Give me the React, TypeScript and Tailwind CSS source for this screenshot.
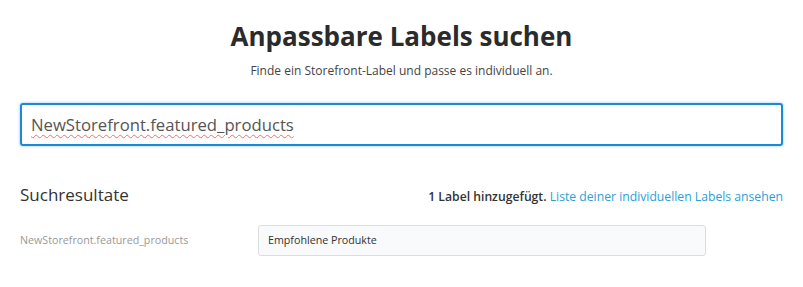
import React from "react";

export default function App() {
  return (
    <div className="w-[803px] h-[287px] bg-white px-5 pt-[18px]" style={{ fontFamily: '"Open Sans", sans-serif' }}>
      <h1 className="text-center text-[26px] leading-[36px] font-bold text-[#2b2b2b]">Anpassbare Labels suchen</h1>
      <p className="text-center text-[12px] leading-[17px] text-[#444] mt-[8px]">Finde ein Storefront-Label und passe es individuell an.</p>
      <div className="mt-[24px] h-[43px] w-[763px] rounded-[3px] border-2 border-[#1a8ad8] shadow-[0_0_3px_rgba(26,138,216,0.5)] flex items-center px-[9px]">
        <span className="text-[16.7px] text-[#555] underline decoration-wavy decoration-[#f07070] decoration-1 underline-offset-[3px]">NewStorefront.featured_products</span>
      </div>
      <div className="mt-[37px] flex items-baseline justify-between">
        <h2 className="text-[17px] leading-[24px] font-normal text-[#333]">Suchresultate</h2>
        <p className="text-[12.2px] leading-[17px]">
          <span className="font-semibold text-[#333]">1 Label hinzugefügt.</span>{" "}
          <a className="text-[#2a9fd6]">Liste deiner individuellen Labels ansehen</a>
        </p>
      </div>
      <div className="mt-[18px] flex items-center">
        <div className="w-[238px] text-[10.7px] text-[#999]">NewStorefront.featured_products</div>
        <div className="h-[31px] w-[448px] rounded-[3px] border border-[#ddd] bg-[#f9fafb] flex items-center px-[9px] text-[10.7px] text-[#333]">Empfohlene Produkte</div>
      </div>
    </div>
  );
}
